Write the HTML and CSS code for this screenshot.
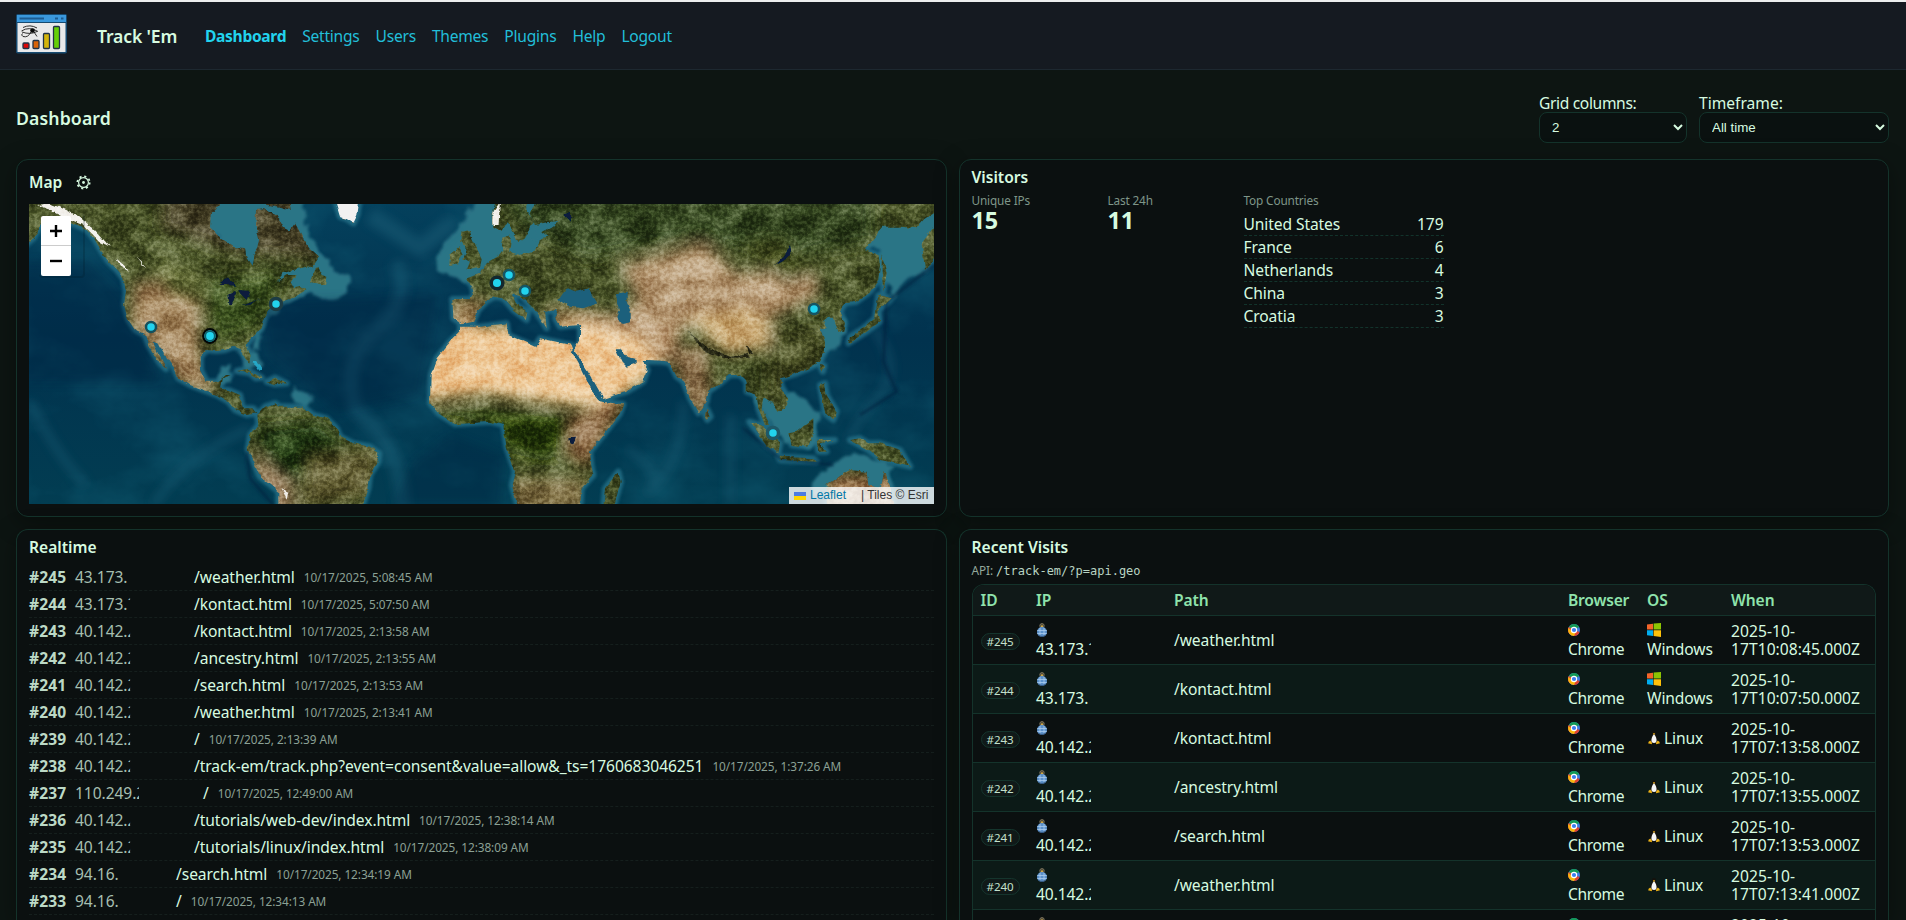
FILE: index.html
```
<!DOCTYPE html>
<html lang="en">
<head>
<meta charset="utf-8">
<title>Track 'Em</title>
<link rel="stylesheet" href="styles.css">
</head>
<body>
<svg class="sprite" width="0" height="0" aria-hidden="true">
  <symbol id="chrome" viewBox="0 0 24 24">
    <circle cx="12" cy="12" r="12" fill="#3f7de0"/>
    <path d="M12 12 1.600 6A12 12 0 0 1 22.400 6Z" fill="#139a55"/>
    <path d="M12 12 23 16A12 12 0 0 1 12 24Z" fill="#e0402f"/>
    <path d="M1.600 6A12 12 0 0 0 3 20L9 15 7 9Z" fill="#e0502f"/>
    <path d="M1 8A12 12 0 0 0 12 24L16 16 7 14Z" fill="#f9b50c"/>
    <circle cx="12" cy="12" r="6.400" fill="#fff"/><circle cx="12" cy="12" r="4.200" fill="#3b7df0"/>
  </symbol>
  <symbol id="windows" viewBox="0 0 14 14">
    <path d="M0 1.400 6 .7V6.600H0Z" fill="#f4652a"/><path d="M6.600.6 14 0V6.600H6.600Z" fill="#8cc404"/>
    <path d="M0 7.200H6V13L0 12.300Z" fill="#00adef"/><path d="M6.600 7.200H14V14L6.600 13.100Z" fill="#ffc20a"/>
  </symbol>
  <symbol id="tux" viewBox="0 0 12 14">
    <path d="M6 0C4 0 3.800 2 4 4 3 6 1.800 8 2 11L6 13 10 11C10.200 8 9 6 8 4 8.200 2 8 0 6 0Z" fill="#15120c"/>
    <path d="M6 3C4.200 5 2.900 8 3.600 11Q6 12.800 8.400 11C9.100 8 7.800 5 6 3Z" fill="#f6f6f6"/>
    <path d="M4.900 2.200H7.100L6 4.200Z" fill="#f0b014"/>
    <path d="M2.200 9.500 4 11.800 3.800 13.300 0 12.300 1 10.500Z" fill="#efb417"/>
    <path d="M9.800 9.500 8 11.800 8.200 13.300 12 12.300 11 10.500Z" fill="#efb417"/>
  </symbol>
  <symbol id="agent" viewBox="0 0 12 14">
    <circle cx="6" cy="2.800" r="2.200" fill="#47412f" stroke="#7d7660"/>
    <circle cx="6" cy="3.200" r="1" fill="#e0b64a"/>
    <circle cx="6" cy="9" r="5" fill="#5c92cb"/>
    <path d="M1.200 7.500H10.800M1.200 10.500H10.800M4 4.800V13M8 4.800V13" stroke="#a9cbed" stroke-width=".8"/>
    <path d="M2.500 12.500Q6 14.500 9.500 12.500" stroke="#31557d" fill="none"/>
  </symbol>
</svg>

<header class="topbar">
  <svg class="logo" width="51" height="40" viewBox="0 0 51 40">
    <rect x=".75" y=".75" width="49.500" height="38" rx="1" fill="#e9e9ea" stroke="#174a70" stroke-width="1.500"/>
    <rect x="1" y="1" width="49" height="7.500" fill="#3a98dc"/>
    <path d="M1 8.500H50" stroke="#174a70"/>
    <path d="M3.500 4.500H28M39 4.500H42M45 4.500H47.500" stroke="#1d5c92" stroke-width="2"/>
    <path d="M7 13.500Q14 10 21 14M5.500 17Q13 12 22 17.500M6 18Q14 21 21 17.500M15 18Q12 24 7 22.500Q4.500 21 6.500 19.500M18 18 21 22.500" fill="none" stroke="#1a1a1a" stroke-width=".9"/>
    <ellipse cx="16.500" cy="16.500" rx="2.300" ry="2.300" fill="#080808"/>
    <g stroke="#203247" stroke-width="1.300">
      <rect x="7" y="29" width="6" height="5.500" rx="1" fill="#dc0606"/>
      <rect x="17" y="26.500" width="6" height="8" rx="1" fill="#d96308"/>
      <rect x="27.500" y="19.500" width="6" height="15" rx="1" fill="#d3b40b"/>
      <rect x="37.500" y="12.500" width="6" height="22" rx="1" fill="#65cf06"/>
    </g>
  </svg>
  <strong class="brand">Track 'Em</strong>
  <nav class="nav">
    <a class="on">Dashboard</a><a>Settings</a><a>Users</a><a>Themes</a><a>Plugins</a><a>Help</a><a>Logout</a>
  </nav>
</header>

<main class="page">
  <div class="pagehead">
    <h1>Dashboard</h1>
    <div class="controls">
      <label>Grid columns:<select class="cols"><option>2</option></select></label>
      <label>Timeframe:<select class="frame"><option>All time</option></select></label>
    </div>
  </div>

  <div class="grid">
    <section class="card">
      <h2 class="maphead">Map <svg class="gear" width="15" height="15" viewBox="0 0 15 15"><g fill="none" stroke="#d5f7de"><circle cx="7.500" cy="7.500" r="4.900" stroke-width="1.200"/><circle cx="7.500" cy="7.500" r="6.200" stroke-width="1.700" stroke-dasharray="2.100 2.770"/></g><circle cx="7.500" cy="7.500" r="1.400" fill="#d5f7de"/></svg></h2>
      <div class="map">
        <svg class="world" width="905" height="300" viewBox="0 0 905 300">
          <defs>
            <filter id="rough" x="-5%" y="-5%" width="110%" height="110%"><feTurbulence type="fractalNoise" baseFrequency=".035" numOctaves="4" seed="4"/><feDisplacementMap in="SourceGraphic" scale="14" xChannelSelector="R" yChannelSelector="G"/></filter>
            <filter id="soft" x="-30%" y="-30%" width="160%" height="160%"><feGaussianBlur stdDeviation="20"/></filter>
            <filter id="haze" x="-10%" y="-10%" width="120%" height="120%"><feGaussianBlur stdDeviation="5"/></filter>
            <filter id="fog" x="-10%" y="-10%" width="120%" height="120%"><feGaussianBlur stdDeviation="14"/></filter>
            <filter id="shelf" x="-10%" y="-10%" width="120%" height="120%"><feTurbulence type="fractalNoise" baseFrequency=".02" numOctaves="3" seed="8"/><feDisplacementMap in="SourceGraphic" scale="50" xChannelSelector="R" yChannelSelector="G"/><feGaussianBlur stdDeviation="4"/></filter>
            <filter id="relief" x="0" y="0" width="100%" height="100%" color-interpolation-filters="sRGB"><feTurbulence type="fractalNoise" baseFrequency=".012 .016" numOctaves="6" seed="9"/><feColorMatrix values="2.600 0 0 0 -.85  2.600 0 0 0 -.85  2.600 0 0 0 -.85  0 0 0 0 1"/></filter>
            <filter id="speckle" x="0" y="0" width="100%" height="100%" color-interpolation-filters="sRGB"><feTurbulence type="fractalNoise" baseFrequency=".09" numOctaves="4" seed="3"/><feColorMatrix values="0 2.600 0 0 -.85  0 2.600 0 0 -.85  0 2.600 0 0 -.85  0 0 0 0 1"/></filter>
            <filter id="swell" x="0" y="0" width="100%" height="100%" color-interpolation-filters="sRGB"><feTurbulence type="fractalNoise" baseFrequency=".012 .018" numOctaves="5" seed="12"/><feColorMatrix values="0 0 0 0 0.080  0 0 0 0 0.380  0 0 0 0 0.470  2.200 0 0 0 -.9"/></filter>
            <g id="west">
              <path d="M0 0V165L40 130 60 95 90 72 130 75 165 88 200 105 225 135 245 170 265 200 290 225 310 250 318 290 312 330 325 375 345 405 375 420 385 450 400 475 420 505 438 522 430 500 410 465 398 440 415 445 435 480 460 515 475 550 510 570 555 587 590 600 625 620 645 645 680 660 712 655 700 640 668 640 660 600 625 585 600 580 605 550 632 540 615 540 590 560 560 560 543 525 542 485 560 465 590 468 615 465 640 455 662 462 675 490 688 503 692 485 680 450 695 430 725 400 735 365 748 345 765 330 790 318 815 310 860 282 845 275 825 280 815 262 830 240 800 240 770 260 790 235 830 222 880 212 898 185 870 160 850 130 825 85 810 105 790 95 770 60 740 42 708 45 706 90 718 130 712 160 700 180 695 212 680 190 675 160 640 155 600 130 570 100 572 60 600 30V0Z"/>
              <path d="M700 0 810 0 815 45 780 35 740 30ZM870 262 885 225 895 215 905 240 922 245 918 270ZM650 528 680 522 725 548 708 550 690 535ZM740 560 765 548 800 565 765 568Z"/>
              <path d="M712 660 735 635 765 625 780 635 850 635 880 660 920 670 950 700 960 725 1000 745 1050 755 1078 775 1075 800 1050 840 1045 880 1025 940H775V890L720 845 695 790 683 765 690 720 715 690Z"/>
              <path d="M940 0H1020L1012 60 1000 85 980 72 960 65Z"/>
              <path d="M1325 110 1350 105 1358 135 1385 190 1380 215 1340 225 1350 200 1330 190 1340 165 1320 140ZM1290 180 1315 160 1325 180 1315 205 1288 210Z"/>
            </g>
            <g id="east">
              <path d="M-83 312-30 312-18 300-25 270-45 252 0 235 20 205 60 180 75 160 66 150 70 125 85 118 92 140 88 170 120 180 170 165 180 130 205 125 185 110 215 95 240 78 200 82 165 90 150 60 175 0H1400V50L1362 55 1330 75 1310 100 1260 95 1210 95 1180 130 1155 165 1195 180 1200 210 1195 255 1170 290 1130 320 1095 325 1080 350 1095 385 1090 410 1075 410 1065 380 1045 362 1030 375 1040 400 1020 400 1035 440 1035 470 1020 500 985 520 950 535 920 545 900 550 905 575 925 610 920 635 895 650 880 625 850 610 845 640 870 690 855 690 835 640 830 600 800 590 800 560 780 540 750 540 720 565 685 590 680 620 655 655 630 610 610 560 590 545 570 505 545 500 485 497 503 525 490 560 440 590 370 612 340 570 310 515 285 465 300 440 300 390 240 395 225 370 230 345 195 350 200 400 185 375 160 340 120 300 95 295 110 330 145 350 140 375 100 345 70 310 45 305 20 318-5 345-20 380-55 388-80 370Z"/>
              <path d="M38 60 50 0H142L142 50 162 80 135 130 115 145 100 110 80 85 65 110 40 95Z"/>
              <path d="M-60 395 0 395 80 385 85 420 165 455 180 430 250 445 275 450 290 490 340 590 365 620 430 628 420 655 385 700 330 770 335 820 340 840 305 880 300 940H115L95 870 105 830 80 760 70 690 30 680-75 688-125 655-150 625-148 540-130 490-90 440-60 410Z"/>
              <path d="M415 830 422 860 400 940H370L375 880ZM680 640 692 665 682 675 675 660ZM808 680 840 690 900 745 895 775 860 750ZM925 715 950 710 1000 670 1000 710 985 755 935 750ZM895 785 1000 790 1010 800 900 795ZM1010 735 1065 735 1020 745 1040 770 1015 770ZM1110 735 1140 730 1165 745 1200 745 1260 765 1290 815 1250 805 1200 795 1165 765ZM1040 870 1080 840 1110 825 1160 830 1165 870 1200 880 1210 825 1235 880 1240 940H1040ZM1020 570 1035 565 1040 600 1070 650 1060 675 1035 655ZM1020 510 1033 512 1028 530ZM1195 300 1235 310 1215 330 1195 345 1200 380 1160 410 1105 445 1110 425 1150 400 1185 370ZM1205 180 1220 235 1210 290 1205 230ZM1400 80 1362 95 1325 145 1335 225 1362 190 1400 150Z"/>
            </g>
            <mask id="land"><g filter="url(#rough)" fill="#fff"><use href="#west"/><use href="#east" x="1380"/></g></mask>
            <linearGradient id="sea" x1="0" y1="0" x2="0" y2="1"><stop offset="0" stop-color="#04405c"/><stop offset=".45" stop-color="#01324e"/><stop offset="1" stop-color="#023d52"/></linearGradient>
          </defs>
          <rect width="905" height="300" fill="url(#sea)"/>
          <rect width="905" height="300" filter="url(#swell)" opacity=".45"/>
          <g transform="translate(-9 -9) scale(.333333)">
            <g fill="none" stroke="#2a7a92" stroke-width="18" opacity=".7" filter="url(#haze)" stroke-linejoin="round"><use href="#west"/><use href="#east" x="1380"/></g>
            <g fill="#2c7486" filter="url(#shelf)">
              <path d="M560 0H850L860 130 910 190 1000 260 950 320 860 300 800 330 740 370 700 480 700 440 760 320 720 200H680L560 110Z"/>
              <path d="M1245 180 1300 120 1380 0H1640V200H1440L1350 260 1260 230Z"/>
              <path d="M2540 150 2620 60 2760 30 2730 200 2620 300 2590 260 2570 180ZM2400 350 2480 370 2470 440 2400 500 2350 520 2400 440ZM2200 600 2330 600 2400 650 2380 760 2290 740ZM2400 830 2500 770 2620 810 2600 900 2400 900 2370 880Z"/>
              <path d="M600 520 640 510 620 560 590 570ZM660 460 710 470 720 520 680 520ZM830 570 870 600 850 635 820 620Z"/>
            </g>
            <g fill="none" stroke="#226780" opacity=".4" filter="url(#fog)">
              <path d="M1130 200Q1180 330 1050 420 960 520 1010 650 1140 740 1150 940" stroke-width="40"/>
              <path d="M1050 60 1200 160 1300 80" stroke-width="50"/>
              <path d="M1990 620Q1990 780 1900 880M1820 760Q1940 830 1880 900M2130 660V930M2560 400Q2660 530 2560 620 2500 700 2480 740" stroke-width="18"/>
              <path d="M30 620Q120 800 200 870M400 930Q500 780 690 700" stroke-width="22"/>
            </g>
            <path d="M720 320 1250 300 1200 600 950 650 750 480ZM200 200 300 300 420 560 0 560V200ZM1290 720 1450 780 1440 930H1120L1180 800Z" fill="#01233f" opacity=".35" filter="url(#fog)"/>
            <g fill="none" stroke="#011f3a" opacity=".6" filter="url(#haze)"><path d="M2742 210 2600 320 2590 500 2630 590 2520 660M2170 700 2280 790 2440 810M680 770 690 850 760 930" stroke-width="9"/></g>
            <g mask="url(#land)">
              <rect width="2800" height="960" fill="#4f5a2b"/>
              <g filter="url(#soft)">
                <path d="M340 260 470 250 540 330 540 470 590 600 480 570 330 390Z" fill="#ac8f66"/>
                <path d="M400 180 540 240 560 330 440 290Z" fill="#71793f"/>
                <path d="M430 0H900V190L640 170 420 100Z" fill="#4d462b"/>
                <path d="M560 260 780 230 740 380 590 440Z" fill="#425a24"/>
                <path d="M700 700 900 680 980 760 880 860 780 860Z" fill="#263f16"/>
                <path d="M860 780 1080 760 1050 900 840 940Z" fill="#5f5a2f"/>
                <path d="M680 760 820 870 820 960 740 960Z" fill="#a88e6c"/>
                <path d="M1290 310H1410L1370 390H1290ZM1560 340 1680 340 1800 360V500L1680 440Z" fill="#a88f64"/>
                <path d="M1800 210 2050 140 2150 230 2390 230 2400 300 2240 380 1990 400 1960 500 1820 480 1760 370 1850 320Z" fill="#bda17b"/>
                <path d="M1640 400 1700 360 1980 400 1970 500 1860 510Z" fill="#c4a680"/>
                <path d="M1440 0H2560V140L2300 190 2000 130 1700 190 1500 90Z" fill="#384b20"/>
                <path d="M2160 150 2280 130 2390 240 2290 260Z" fill="#4b5524"/>
                <path d="M2000 370 2180 340 2260 390 2240 460 2120 480Z" fill="#cfb07c"/>
                <path d="M1950 460 2060 450 2080 660 2000 640Z" fill="#967a54"/>
                <path d="M2250 400 2420 400 2390 530 2240 640Z" fill="#4e5228"/>
                <path d="M1200 390H1700L1850 430 1930 520 1760 640 1640 630 1400 600 1190 620Z" fill="#efca98"/>
                <path d="M1200 640 1460 645 1640 655 1650 740 1580 800 1460 770 1400 690Z" fill="#2e4411"/>
                <path d="M1650 660 1820 620 1700 820 1640 780Z" fill="#93704a"/>
                <path d="M1470 850H1700V960H1470Z" fill="#86764a"/>
                <path d="M2420 840H2640V960H2420Z" fill="#a8835a"/>
              </g>
              <g fill="#f4f2ee" filter="url(#rough)"><path d="M50 30 90 25 170 60 220 100 270 155 240 140 190 90 140 70 90 45ZM285 190 330 230 300 215ZM345 185 380 220 365 210ZM1420 50 1440 20 1436 90 1420 90ZM785 880 805 890 800 915Z"/></g>
              <path d="M2000 405 2060 455 2130 485 2200 475 2180 450 2190 485 2110 490 2050 465Z" fill="#2b2c18" filter="url(#rough)"/>
              <rect class="relief" width="2800" height="960" filter="url(#relief)"/>
              <rect class="speckle" width="2800" height="960" filter="url(#speckle)"/>
              <path d="M930 0H1030L1005 85 960 68Z" fill="#f1f1f1"/>
            </g>
            <g filter="url(#rough)">
              <path d="M595 270 625 250 650 272 620 270ZM628 330 625 295 650 288 636 330ZM655 285 690 288 680 315 660 295ZM665 332 705 318 722 310 690 330ZM2265 212 2310 150 2314 168 2290 198ZM1630 60 1650 50 1650 80ZM1645 730 1668 728 1660 748 1648 745Z" fill="#071c3c"/>
              <path d="M1615 315 1640 280 1670 290 1705 280 1732 325 1690 340 1650 335ZM1800 295 1820 290 1820 320 1832 350 1832 385 1805 390 1792 370 1800 345 1784 305ZM1785 460 1800 460 1820 485 1850 492 1850 505 1820 515 1805 500ZM1650 462 1668 472 1693 515 1722 560 1748 606 1738 612 1702 560 1675 505Z" fill="#1d607b"/>
              <path d="M1520 120 1545 90 1550 140Z" fill="#2c7486"/>
            </g>
            <path d="M700 500Q715 510 722 525" stroke="#28b5d8" stroke-width="9" fill="none" opacity=".8" filter="url(#rough)"/>
          </g>
          <g fill="#22d3ee">
            <circle cx="122" cy="123" r="5" stroke="#16505c" stroke-width="2.500"/>
            <circle cx="181" cy="132" r="6.800" stroke="#020606" stroke-width="2.200"/><circle cx="181" cy="132" r="4.800" stroke="#12606b" stroke-width="1.800"/>
            <circle cx="247" cy="100" r="5.500" stroke="#1c3c45" stroke-width="3.500"/>
            <circle cx="468" cy="79" r="5.800" stroke="#13282e" stroke-width="3.500"/>
            <circle cx="480" cy="71" r="5" stroke="#155564" stroke-width="2.500"/>
            <circle cx="496" cy="87" r="5" stroke="#155564" stroke-width="2.500"/>
            <circle cx="785" cy="105" r="5" stroke="#155564" stroke-width="2.500"/>
            <circle cx="744" cy="229" r="5.500" stroke="#1e5868" stroke-width="3.500"/>
          </g>
        </svg>
        <div class="zoombar"><div class="zoombtns"><span><svg width="12" height="12"><path d="M0 6H12M6 0V12" stroke="#000" stroke-width="2.400"/></svg></span><span><svg width="12" height="12"><path d="M0 6H12" stroke="#000" stroke-width="2.400"/></svg></span></div></div>
        <div class="credit"><svg width="12" height="8"><path d="M0 0H12V4H0Z" fill="#4C7BE1"/><path d="M0 4H12V8H0Z" fill="#FFD500"/></svg><a>Leaflet</a><span>| Tiles © Esri</span></div>
      </div>
    </section>

    <section class="card">
      <h2>Visitors</h2>
      <div class="stats">
        <div><div class="cap">Unique IPs</div><div class="big">15</div></div>
        <div><div class="cap">Last 24h</div><div class="big">11</div></div>
        <div><div class="cap">Top Countries</div>
          <ul class="countries">
            <li><span>United States</span><span>179</span></li>
            <li><span>France</span><span>6</span></li>
            <li><span>Netherlands</span><span>4</span></li>
            <li><span>China</span><span>3</span></li>
            <li><span>Croatia</span><span>3</span></li>
          </ul>
        </div>
      </div>
    </section>

    <section class="card tall">
      <h2>Realtime</h2>
      <div class="feed">
        <div><b>#245</b><span class="ip">43.173.</span><span>/weather.html</span><time>10/17/2025, 5:08:45 AM</time></div>
        <div><b>#244</b><span class="ip">43.173.<i class="cut top">2</i></span><span>/kontact.html</span><time>10/17/2025, 5:07:50 AM</time></div>
        <div><b>#243</b><span class="ip">40.142.<i class="cut low">2</i></span><span>/kontact.html</span><time>10/17/2025, 2:13:58 AM</time></div>
        <div><b>#242</b><span class="ip">40.142.<i class="cut">2</i></span><span>/ancestry.html</span><time>10/17/2025, 2:13:55 AM</time></div>
        <div><b>#241</b><span class="ip">40.142.<i class="cut">2</i></span><span>/search.html</span><time>10/17/2025, 2:13:53 AM</time></div>
        <div><b>#240</b><span class="ip">40.142.<i class="cut">2</i></span><span>/weather.html</span><time>10/17/2025, 2:13:41 AM</time></div>
        <div><b>#239</b><span class="ip">40.142.<i class="cut">2</i></span><span>/</span><time>10/17/2025, 2:13:39 AM</time></div>
        <div><b>#238</b><span class="ip">40.142.<i class="cut">2</i></span><span>/track-em/track.php?event=consent&amp;value=allow&amp;_ts=1760683046251</span><time>10/17/2025, 1:37:26 AM</time></div>
        <div><b>#237</b><span class="ip long">110.249.<i class="cut">2</i></span><span>/</span><time>10/17/2025, 12:49:00 AM</time></div>
        <div><b>#236</b><span class="ip">40.142.<i class="cut low">2</i></span><span>/tutorials/web-dev/index.html</span><time>10/17/2025, 12:38:14 AM</time></div>
        <div><b>#235</b><span class="ip">40.142.<i class="cut">2</i></span><span>/tutorials/linux/index.html</span><time>10/17/2025, 12:38:09 AM</time></div>
        <div><b>#234</b><span class="ip short">94.16.</span><span>/search.html</span><time>10/17/2025, 12:34:19 AM</time></div>
        <div><b>#233</b><span class="ip short">94.16.</span><span>/</span><time>10/17/2025, 12:34:13 AM</time></div>
      </div>
    </section>

    <section class="card tall">
      <h2>Recent Visits</h2>
      <p class="api">API: <code>/track-em/?p=api.geo</code></p>
      <div class="visits">
        <div class="row head"><span>ID</span><span>IP</span><span>Path</span><span>Browser</span><span>OS</span><span>When</span></div>
        <div class="row"><span><em>#245</em></span><span><svg class="ic"><use href="#agent"/></svg>43.173.<i class="cut top">2</i></span><span>/weather.html</span><span class="br"><svg class="ic"><use href="#chrome"/></svg>Chrome</span><span class="br"><svg class="ic win"><use href="#windows"/></svg>Windows</span><span class="when">2025-10-<br>17T10:08:45.000Z</span></div>
        <div class="row alt"><span><em>#244</em></span><span><svg class="ic"><use href="#agent"/></svg>43.173.</span><span>/kontact.html</span><span class="br"><svg class="ic"><use href="#chrome"/></svg>Chrome</span><span class="br"><svg class="ic win"><use href="#windows"/></svg>Windows</span><span class="when">2025-10-<br>17T10:07:50.000Z</span></div>
        <div class="row"><span><em>#243</em></span><span><svg class="ic"><use href="#agent"/></svg>40.142.<i class="cut">2</i></span><span>/kontact.html</span><span class="br"><svg class="ic"><use href="#chrome"/></svg>Chrome</span><span class="os"><svg class="tux"><use href="#tux"/></svg>Linux</span><span class="when">2025-10-<br>17T07:13:58.000Z</span></div>
        <div class="row alt"><span><em>#242</em></span><span><svg class="ic"><use href="#agent"/></svg>40.142.<i class="cut">2</i></span><span>/ancestry.html</span><span class="br"><svg class="ic"><use href="#chrome"/></svg>Chrome</span><span class="os"><svg class="tux"><use href="#tux"/></svg>Linux</span><span class="when">2025-10-<br>17T07:13:55.000Z</span></div>
        <div class="row"><span><em>#241</em></span><span><svg class="ic"><use href="#agent"/></svg>40.142.<i class="cut">2</i></span><span>/search.html</span><span class="br"><svg class="ic"><use href="#chrome"/></svg>Chrome</span><span class="os"><svg class="tux"><use href="#tux"/></svg>Linux</span><span class="when">2025-10-<br>17T07:13:53.000Z</span></div>
        <div class="row alt"><span><em>#240</em></span><span><svg class="ic"><use href="#agent"/></svg>40.142.<i class="cut">2</i></span><span>/weather.html</span><span class="br"><svg class="ic"><use href="#chrome"/></svg>Chrome</span><span class="os"><svg class="tux"><use href="#tux"/></svg>Linux</span><span class="when">2025-10-<br>17T07:13:41.000Z</span></div>
        <div class="row last"><span></span><span><svg class="ic"><use href="#agent"/></svg></span><span></span><span><svg class="ic"><use href="#chrome"/></svg></span><span></span><span class="when">2025-10-</span></div>
      </div>
    </section>
  </div>
</main>
</body>
</html>
```
FILE: styles.css
```
* { box-sizing: border-box; }
body {
  margin: 0;
  height: 920px;
  overflow: hidden;
  background: #0d1512;
  border-top: 2px solid #eceeee;
  color: #d7fbe0;
  font: 15.6px/18px "Noto Sans", sans-serif;
  letter-spacing: -0.07px;
}
.sprite { position: absolute; }
h1, h2, p, ul { margin: 0; padding: 0; }

.topbar {
  display: flex;
  align-items: center;
  height: 68px;
  padding: 0 16px 1px;
  background: #151a21;
  border-bottom: 1px solid #1d2830;
}
.logo { width: 51px; height: 40px; margin-top: -2px; }
.brand { margin-left: 30px; width: 108px; padding-top: 1px; font-size: 17.6px; font-weight: 600; letter-spacing: -0.15px; }
.nav { display: flex; gap: 16px; padding-top: 1px; color: #22bfd9; letter-spacing: -0.25px; }
.nav .on { font-weight: 700; color: #22d3ee; letter-spacing: -0.33px; }

.page { padding: 22px 16px 0; }
.pagehead { display: flex; justify-content: space-between; height: 67px; }
h1 { font-size: 17.7px; line-height: 24px; font-weight: 600; margin-top: 14px; letter-spacing: 0.1px; }
.controls { display: flex; gap: 12px; }
.controls label { display: flex; flex-direction: column; padding-top: 2px; line-height: 18px; letter-spacing: -0.35px; }
.controls label + label { letter-spacing: 0; }
select {
  height: 31px;
  padding: 0 8px;
  background: #0a1110;
  color: #d7fbe0;
  border: 1px solid #14332b;
  border-radius: 8px;
  font: 13.33px "Liberation Sans", sans-serif;
}
.cols { width: 148px; }
.frame { width: 190px; margin-right: 1px; }

.grid { display: grid; grid-template-columns: 930.5px 930.5px; grid-template-rows: 358px 391px; gap: 12px; }
.card {
  padding: 8px 12px;
  background: #0b1010;
  border: 1px solid #14332b;
  border-radius: 12px;
  box-shadow: 0 6px 24px rgba(0, 0, 0, .35);
}
.tall { height: 391px; padding-bottom: 0; overflow: hidden; border-bottom: 0; border-radius: 12px 12px 0 0; }
h2 { font-size: 15.6px; line-height: 18px; font-weight: 600; letter-spacing: 0; }
.maphead { display: flex; align-items: center; gap: 14px; height: 28px; margin-bottom: 8px; }
.gear { display: block; }

.map { position: relative; width: 905px; height: 300px; overflow: hidden; }
.world { display: block; }
.relief { mix-blend-mode: soft-light; opacity: .5; }
.speckle { mix-blend-mode: soft-light; opacity: .35; }
.zoombar {
  position: absolute; left: 10px; top: 10px; width: 46px; height: 64px;
  border: 2px solid rgba(0, 20, 30, .2); border-left: 0; border-top: 0; border-radius: 4px;
}
.zoombtns { position: absolute; left: 2px; top: 2px; width: 30px; background: #fff; border-radius: 2px; }
.zoombtns span { display: flex; align-items: center; justify-content: center; height: 30px; }
.zoombtns span:first-child { border-bottom: 1px solid #ccc; }
.credit {
  position: absolute; right: 0; bottom: 0; display: flex; align-items: center;
  width: 145px; height: 17px; padding: 0 5px;
  background: rgba(255, 255, 255, .8); color: #333;
  font: 12px/17px "Liberation Sans", sans-serif; letter-spacing: 0;
}
.credit a { color: #0078a8; margin: 0 15px 0 4px; }

.stats { display: grid; grid-template-columns: 120px 120px 200px; gap: 16px; margin-top: 6px; }
.cap { font-size: 11.8px; line-height: 16px; color: #7f9689; letter-spacing: -0.15px; }
.big { font-size: 23.4px; line-height: 25px; font-weight: 700; }
.countries { list-style: none; margin-top: 5px; letter-spacing: -0.1px; }
.countries li { display: flex; justify-content: space-between; height: 23px; line-height: 22px; border-bottom: 1px dashed #12332b; }

.feed { margin-top: 8px; }
.feed div { display: flex; align-items: center; height: 27px; border-bottom: 1px dashed #151f1d; white-space: pre; }
.feed b { width: 46px; color: #bcd9c6; letter-spacing: 0.15px; }
.feed .ip { width: 119px; color: #a6bfb0; }
.feed .long { width: 128px; }
.feed .short { width: 101px; }
.feed time { margin: 0 0 0 9px; font-size: 11.8px; color: #8ba195; }
.cut { display: inline-block; font-style: normal; clip-path: inset(0 70% 0 0); }
.cut.top { clip-path: inset(0 70% 60% 0); }
.cut.low { clip-path: inset(50% 70% 0 0); }

.api { margin-top: 6px; font-size: 11.8px; line-height: 16px; color: #93a99c; }
.api code { font: 12px "DejaVu Sans Mono", monospace; letter-spacing: 0; color: #b9d4c3; }
.visits { margin-top: 6px; width: 904.5px; border: 1px solid #14332b; border-bottom: 0; border-radius: 12px 12px 0 0; overflow: hidden; }
.row {
  display: grid; grid-template-columns: 39.5px 122px 378px 63px 68px 129px; column-gap: 16px;
  align-items: center; height: 49px; padding-left: 8px; border-bottom: 1px solid #14332b;
  letter-spacing: -0.1px;
}
.head { height: 31px; background: #101918; color: #8fe3ac; font-weight: 600; }
.head span:nth-child(4) { letter-spacing: -0.2px; }
.alt { background: #0c1a17; }
.last { height: 12px; align-items: start; padding-top: 6px; border: 0; overflow: hidden; }
.row em {
  display: inline-block; width: 39px; height: 17px; margin-top: 1px;
  border: 1px solid #15352d; border-radius: 9px; background: #101918;
  font: normal 11.6px/15px "Noto Sans", sans-serif; text-align: center; color: #c3e0cd;
}
.br { letter-spacing: -0.38px; }
.row .br + .br { letter-spacing: -0.1px; }
.row .when { letter-spacing: 0.05px; }
.ic { display: block; width: 12px; height: 12px; margin: 2px 0 4px; }
.row span:nth-child(2) .ic { height: 14px; margin: 1px 0 3px; }
.ic.win { width: 14px; height: 14px; margin: 1px 0 3px; }
.os { display: flex; align-items: center; gap: 4px; }
.tux { width: 12px; height: 14px; margin-left: 1px; }
```
